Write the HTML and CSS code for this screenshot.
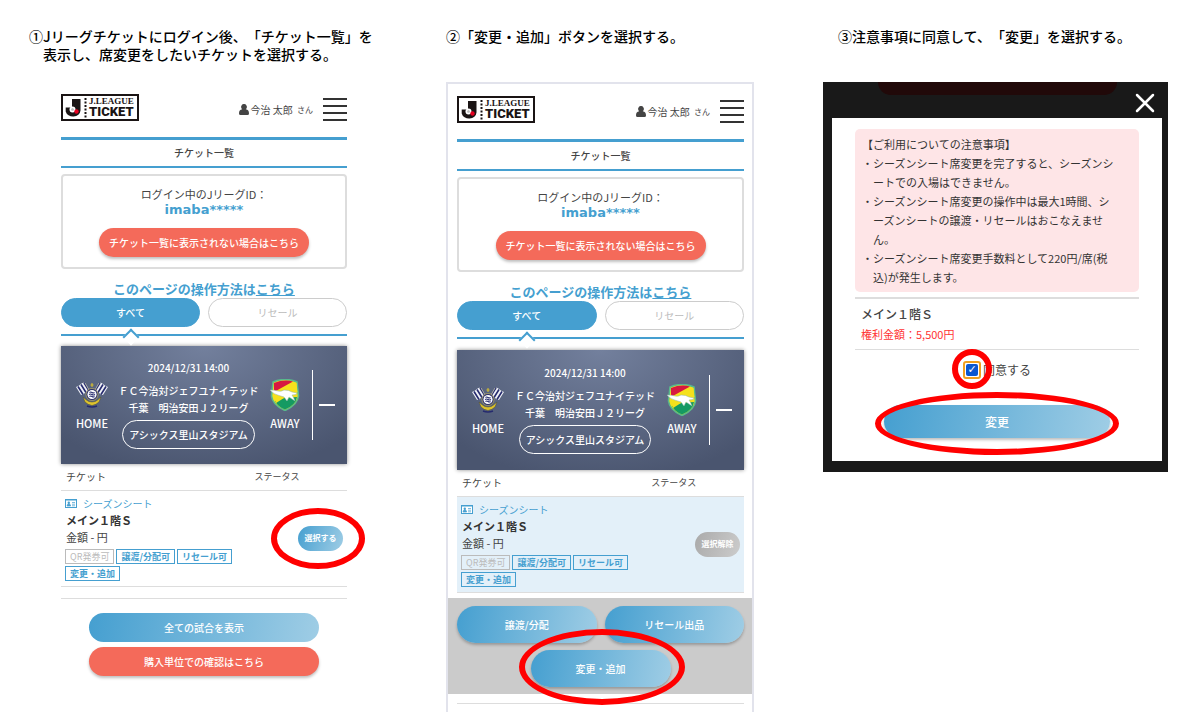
FILE: index.html
```html
<!DOCTYPE html>
<html lang="ja">
<head>
<meta charset="utf-8">
<meta name="viewport" content="width=device-width, initial-scale=1">
<title>シーズンシート席変更の手順</title>
<link rel="stylesheet" href="styles.css">
</head>
<body>
<svg class="sprite" aria-hidden="true">
  <symbol id="logo-mark" viewBox="0 0 78 27">
    <rect x="1" y="1" width="76" height="25" fill="#fff" stroke="#1a1414" stroke-width="2"/>
    <path d="M11 5h8.500v11.500a7.500 6.500 0 0 1-14.800 1v-4h5.300a2 2 0 0 0 1 .5z" fill="#1a1414"/>
    <circle cx="11.500" cy="15.500" r="3" fill="#fff"/>
    <path d="M11.500 14l1.500 1-.5 1.800h-2l-.5-1.800z" fill="#bbb"/>
    <circle cx="15.500" cy="17.500" r="2.200" fill="#e60020"/>
    <path d="M24.500 4v20" stroke="#1a1414" stroke-width="2" stroke-dasharray="2 1.500"/>
  </symbol>
  <symbol id="user" viewBox="0 0 10 11">
    <path d="M5 0a2.700 2.900 0 0 1 1.800 5.200C9 5.500 10 7 10 9.500Q10 11 8.500 11h-7Q0 11 0 9.500C0 7 1 5.500 3.200 5.200A2.700 2.900 0 0 1 5 0z" fill="#444"/>
  </symbol>
  <symbol id="card" viewBox="0 0 12 9">
    <rect x=".5" y=".5" width="11" height="8" fill="#fff" stroke="#459fd0"/>
    <path d="M1 1h10" stroke="#459fd0"/>
    <circle cx="3.800" cy="3.700" r="1.200" fill="#459fd0"/>
    <path d="M2 7q0-2 1.800-2t1.800 2zM7 3.500h3M7 5.200h3M7 6.800h3" fill="#459fd0" stroke="#459fd0" stroke-width=".7"/>
  </symbol>
  <symbol id="home" viewBox="0 0 32 26">
    <path d="M0 5q3-1 5-3t4-1l5 8q-3 0-5 2t-4 2z" fill="#eef0f5"/>
    <path d="M2 4.500l5 8M5 2.500l5 8M8 .8l5 8" stroke="#252a6e" stroke-width="1.600"/>
    <path d="M9 1l8 14" stroke="#b9b9a0" stroke-width=".8"/>
    <g transform="translate(32 0) scale(-1 1)">
      <path d="M0 5q3-1 5-3t4-1l5 8q-3 0-5 2t-4 2z" fill="#eef0f5"/>
      <path d="M2 4.500l5 8M5 2.500l5 8M8 .8l5 8" stroke="#252a6e" stroke-width="1.600"/>
      <path d="M9 1l8 14" stroke="#b9b9a0" stroke-width=".8"/>
    </g>
    <path d="M7 15l2 5q3 3 7 3.500 4-.5 7-3.500l2-5-3.500 3q-2 2-5.500 2t-5.500-2z" fill="#ddc32d" stroke="#4a4a38" stroke-width=".5"/>
    <circle cx="16" cy="12.500" r="6" fill="#252a6e" stroke="#dccb60" stroke-width=".6"/>
    <circle cx="16" cy="12.500" r="4.600" fill="#fff"/>
    <path d="M13.500 10.500q1.200-1 2.500 0t2.500 0M13 12.500q1.500-1 3 0t3 0M13.500 14.500q1.200-1 2.500 0t2.500 0" stroke="#252a6e" stroke-width="1.100" fill="none"/>
    <path d="M16 1v4M14.500 3h3" stroke="#ddc32d" stroke-width="1"/>
    <path d="M11 24q5 2 10 0" stroke="#252a6e" stroke-width="1.500" fill="none"/>
  </symbol>
  <symbol id="away" viewBox="0 0 30 32">
    <path d="M3 3q12-5 24 0l1.500 14q-1 9-13.500 14.500Q2.500 26 1.500 17z" fill="#f5e11c" stroke="#58b98c" stroke-width="1.600"/>
    <path d="M4 4q10-4 19-1.500L4 13z" fill="#d71840"/>
    <path d="M23 3l3.500 1 1 9-9-1z" fill="#f5e11c"/>
    <path d="M5 22l9-3 13-1q-1 8-12 12.500Q8 28 5 22z" fill="#159a62"/>
    <path d="M3 15l3 9 8-5-5-5z" fill="#f5e11c"/>
    <path d="M0 11q5 0 8 1t6-1q5 0 8 2l5 1-1 1.500-4 .5q2 3 3 6l-6-4-2 4-3-4-5-1.500q-5-1-9-5.500z" fill="#fff" stroke="#8fb6a5" stroke-width=".5"/>
  </symbol>
</svg>

<main class="steps">
  <section class="step">
    <h2 class="step-title">①Jリーグチケットにログイン後、「チケット一覧」を<br>表示し、席変更をしたいチケットを選択する。</h2>
    <div class="phone phone-plain">
      <header class="bar">
        <a href="#"><svg class="logo" viewBox="0 0 78 27"><use href="#logo-mark"/><text x="28" y="10" class="logo-top">J.LEAGUE</text><text x="28" y="22" class="logo-main">TICKET</text></svg></a>
        <p class="user"><svg class="user-icon"><use href="#user"/></svg>今治 太郎 <small>さん</small></p>
        <button class="menu" aria-label="メニュー"><i></i><i></i><i></i><i></i></button>
      </header>
      <h3 class="page-title">チケット一覧</h3>
      <div class="id-box">
        <p class="id-label">ログイン中のJリーグID：</p>
        <p class="id-value">imaba*****</p>
        <button class="btn btn-red">チケット一覧に表示されない場合はこちら</button>
      </div>
      <p class="howto">このページの操作方法は<a href="#">こちら</a></p>
      <div class="tabs">
        <button class="tab tab-on">すべて</button>
        <button class="tab">リセール</button>
      </div>
      <div class="tab-rule"></div>
      <div class="match">
        <div class="team"><svg class="emblem"><use href="#home"/></svg><span>HOME</span></div>
        <div class="game">
          <p class="time">2024/12/31 14:00</p>
          <p class="name">ＦＣ今治対ジェフユナイテッド千葉　明治安田Ｊ２リーグ</p>
          <p class="venue">アシックス里山スタジアム</p>
        </div>
        <div class="team"><svg class="emblem"><use href="#away"/></svg><span>AWAY</span></div>
        <button class="fold" aria-label="閉じる"><i></i></button>
      </div>
      <table class="tickets">
        <thead><tr><th>チケット</th><th class="status">ステータス</th></tr></thead>
        <tbody><tr>
          <td>
            <p class="kind"><svg class="card-icon"><use href="#card"/></svg>シーズンシート</p>
            <p class="seat">メイン１階Ｓ</p>
            <p class="price">金額 - 円</p>
            <ul class="tags"><li class="off">QR発券可</li><li>譲渡/分配可</li><li>リセール可</li><li>変更・追加</li></ul>
          </td>
          <td class="action"><span class="marked mark-select"><button class="pick">選択する</button></span></td>
        </tr></tbody>
      </table>
      <hr class="rule">
      <div class="links">
        <button class="btn btn-blue">全ての試合を表示</button>
        <button class="btn btn-red">購入単位での確認はこちら</button>
      </div>
    </div>
  </section>

  <section class="step">
    <h2 class="step-title">②「変更・追加」ボタンを選択する。</h2>
    <div class="phone phone-framed">
      <header class="bar">
        <a href="#"><svg class="logo" viewBox="0 0 78 27"><use href="#logo-mark"/><text x="28" y="10" class="logo-top">J.LEAGUE</text><text x="28" y="22" class="logo-main">TICKET</text></svg></a>
        <p class="user"><svg class="user-icon"><use href="#user"/></svg>今治 太郎 <small>さん</small></p>
        <button class="menu" aria-label="メニュー"><i></i><i></i><i></i><i></i></button>
      </header>
      <h3 class="page-title">チケット一覧</h3>
      <div class="id-box">
        <p class="id-label">ログイン中のJリーグID：</p>
        <p class="id-value">imaba*****</p>
        <button class="btn btn-red">チケット一覧に表示されない場合はこちら</button>
      </div>
      <p class="howto">このページの操作方法は<a href="#">こちら</a></p>
      <div class="tabs">
        <button class="tab tab-on">すべて</button>
        <button class="tab">リセール</button>
      </div>
      <div class="tab-rule"></div>
      <div class="match">
        <div class="team"><svg class="emblem"><use href="#home"/></svg><span>HOME</span></div>
        <div class="game">
          <p class="time">2024/12/31 14:00</p>
          <p class="name">ＦＣ今治対ジェフユナイテッド千葉　明治安田Ｊ２リーグ</p>
          <p class="venue">アシックス里山スタジアム</p>
        </div>
        <div class="team"><svg class="emblem"><use href="#away"/></svg><span>AWAY</span></div>
        <button class="fold" aria-label="閉じる"><i></i></button>
      </div>
      <table class="tickets">
        <thead><tr><th>チケット</th><th class="status">ステータス</th></tr></thead>
        <tbody><tr class="selected">
          <td>
            <p class="kind"><svg class="card-icon"><use href="#card"/></svg>シーズンシート</p>
            <p class="seat">メイン１階Ｓ</p>
            <p class="price">金額 - 円</p>
            <ul class="tags"><li class="off">QR発券可</li><li>譲渡/分配可</li><li>リセール可</li><li>変更・追加</li></ul>
          </td>
          <td class="action"><button class="pick pick-off">選択解除</button></td>
        </tr></tbody>
      </table>
      <div class="dock">
        <button class="btn btn-blue">譲渡/分配</button>
        <button class="btn btn-blue">リセール出品</button>
        <span class="marked mark-change"><button class="btn btn-blue">変更・追加</button></span>
      </div>
      <hr class="rule">
    </div>
  </section>

  <section class="step">
    <h2 class="step-title step-title-inset">③注意事項に同意して、「変更」を選択する。</h2>
    <div class="overlay">
      <div class="overlay-top">
        <span class="behind"></span>
        <button class="close" aria-label="閉じる"><svg viewBox="0 0 20 20"><path d="M2 2l16 16M18 2L2 18" stroke="#fff" stroke-width="2.500" stroke-linecap="round"/></svg></button>
      </div>
      <div class="dialog">
        <div class="notice">
          <p>【ご利用についての注意事項】</p>
          <ul>
            <li>シーズンシート席変更を完了すると、シーズンシートでの入場はできません。</li>
            <li>シーズンシート席変更の操作中は最大1時間、シーズンシートの譲渡・リセールはおこなえません。</li>
            <li>シーズンシート席変更手数料として220円/席(税込)が発生します。</li>
          </ul>
        </div>
        <div class="summary">
          <p class="summary-seat">メイン１階Ｓ</p>
          <p class="summary-fee">権利金額：5,500円</p>
        </div>
        <div class="agree">
          <span class="marked mark-check"><input type="checkbox" id="agree" checked></span>
          <label for="agree">同意する</label>
        </div>
        <div class="marked mark-submit"><button class="btn btn-blue">変更</button></div>
      </div>
    </div>
  </section>
</main>
</body>
</html>
```

FILE: styles.css
```css
:root {
  --blue: #459fd0;
  --red: #f46a5a;
  --ink: #444;
  --line: #ddd;
}

* { box-sizing: border-box; }

body {
  margin: 0;
  background: #fff;
  color: var(--ink);
  font: 10px/16px "Noto Sans CJK JP", sans-serif;
  text-spacing-trim: space-all;
}

p, h2, h3, ul { margin: 0; padding: 0; font-size: inherit; }
ul { list-style: none; }
button { padding: 0; border: 0; background: none; font: inherit; cursor: pointer; }
svg { display: block; }
.sprite { position: absolute; width: 0; height: 0; }

.steps {
  display: grid;
  grid-template-columns: 348fr 308fr 345fr;
  align-items: start;
  gap: 69px;
  padding: 27px 32px 0 29px;
}

.step-title {
  min-height: 55px;
  padding-left: 14px;
  color: #000;
  font-size: 14px;
  font-weight: 500;
  line-height: 18px;
  text-indent: -14px;
  white-space: nowrap;
}
.step-title-inset { padding-left: 29px; }

.phone-plain { padding: 12px 30px 0 32px; }
.phone-framed {
  padding: 12px 8px 8px 9px;
  border: 2px solid #e2e3ec;
  border-bottom: 0;
}

/* Header */
.bar { display: flex; align-items: center; margin-bottom: 16px; }
.logo { width: 78px; height: 27px; }
.logo-top { font: 700 9px "Liberation Serif", serif; fill: #1a1414; }
.logo-main { font: 900 13px Roboto, sans-serif; fill: #1a1414; }
.user { display: flex; align-items: center; gap: 2px; margin-left: auto; padding-top: 4px; line-height: 23px; white-space: pre; }
.user small { font-size: 8px; }
.user-icon { width: 10px; height: 11px; }
.menu { display: grid; gap: 5px; width: 24px; margin-left: 10px; padding-top: 4px; }
.menu i { height: 2px; background: #333; }

.page-title {
  border-top: 3px solid var(--blue);
  border-bottom: 2px solid var(--blue);
  font-weight: 500;
  line-height: 26px;
  text-align: center;
}
.phone-framed .page-title { line-height: 27px; }

/* Buttons */
.btn {
  min-height: 29px;
  border-radius: 19px;
  color: #fff;
  font-weight: 500;
  box-shadow: 0 2px 3px rgba(0, 0, 0, .25);
}
.btn-red { background: var(--red); }
.btn-blue { background: linear-gradient(100deg, #459fd0, #9fcde5); }

.id-box {
  display: flex;
  flex-direction: column;
  align-items: center;
  margin-top: 6px;
  padding: 10px 0;
  border: 2px solid var(--line);
  border-radius: 4px;
}
.id-label { font-size: 11px; }
.id-value { color: var(--blue); font: 700 13px/16px "DejaVu Sans", sans-serif; }
.id-box .btn { margin-top: 10px; padding: 0 10px; }

.howto {
  margin-top: 10px;
  color: var(--blue);
  font-size: 13px;
  font-weight: 700;
  line-height: 19px;
  text-align: center;
}
.howto a { color: inherit; }

/* Tabs */
.tabs { display: grid; grid-template-columns: 1fr 1fr; gap: 8px; }
.tab { min-height: 29px; border: 1px solid #ccc; border-radius: 15px; color: #bbb; }
.tab-on { border-color: var(--blue); background: var(--blue); color: #fff; font-weight: 500; }
.tab-rule { position: relative; margin: 7px 0 10px; border-top: 2px solid var(--blue); }
.phone-framed .tab-rule { margin-bottom: 11px; }
.tab-rule::after {
  content: "";
  position: absolute;
  top: -5px;
  left: 24%;
  width: 10px;
  height: 10px;
  margin-left: -5px;
  border: solid var(--blue);
  border-width: 2px 0 0 2px;
  background: #fff;
  transform: rotate(45deg);
}

/* Match card */
.match {
  display: grid;
  grid-template-columns: 42px 1fr 42px 29px;
  align-items: center;
  padding: 14px 12px 15px 10px;
  background: radial-gradient(ellipse 70% 110% at 50% 0, #73809d, #4a556f);
  box-shadow: 0 0 4px rgba(0, 0, 0, .45);
  color: #fff;
}
.phone-framed .match { padding-top: 15px; padding-bottom: 16px; }
.team { display: grid; justify-items: center; gap: 4px; font-size: 11px; font-weight: 500; }
.emblem { width: 32px; height: 32px; }
.game { padding: 0 4px; text-align: center; font-weight: 500; }
.name { margin: 6px 0 4px; line-height: 17px; }
.venue { width: max-content; margin: auto; padding: 0 6px; border: 1px solid #fff; border-radius: 15px; line-height: 27px; }
.fold { display: flex; align-items: center; justify-content: flex-end; height: 70px; margin-left: 6px; border-left: 1px solid #fff; }
.fold i { width: 16px; height: 2px; background: #fff; }

/* Ticket list */
.tickets { width: 100%; border-spacing: 0; table-layout: fixed; }
.tickets th { padding: 0 5px; font-weight: 400; line-height: 26px; text-align: left; }
.tickets .status { width: 40%; padding-left: 22px; font-size: 9px; }
.tickets td { padding: 4px 0 5px 4px; border: solid var(--line); border-width: 1px 0; }
.tickets .action { padding-right: 4px; text-align: right; }
.selected { background: #e3f0f9; }
.kind { display: flex; align-items: center; gap: 6px; color: var(--blue); line-height: 17px; }
.card-icon { width: 12px; height: 9px; }
.seat, .price { padding-left: 1px; font-size: 11px; line-height: 17px; }
.seat { color: #333; font-weight: 700; }
.tags { display: flex; flex-wrap: wrap; gap: 2px; margin: 3px -8px 0 0; }
.tags li { padding: 0 4px; border: 1px solid var(--blue); color: var(--blue); font-size: 9px; font-weight: 700; line-height: 13px; }
.tags .off { border-color: #bbb; color: #bbb; font-weight: 400; }
.pick { width: 45px; height: 25px; border-radius: 13px; background: linear-gradient(110deg, #459fd0, #9fcde5); color: #fff; font-size: 8px; font-weight: 700; }
.pick-off { background: linear-gradient(110deg, #aaa, #ccc); }

.rule { margin: 11px 0 0; border: 0; border-top: 1px solid var(--line); }
.links { display: grid; gap: 5px; margin: 14px 28px 0; }
.links .btn-blue { box-shadow: none; }

.dock {
  display: grid;
  grid-template-columns: 1fr 1fr;
  gap: 7px 8px;
  margin: 5px -8px 0 -9px;
  padding: 8px 8px 7px 9px;
  background: #cbcbcb;
}
.dock .btn { min-height: 37px; }
.dock .marked { grid-column: 1 / -1; justify-self: center; width: 140px; }
.dock .marked .btn { width: 100%; }
.dock + .rule { margin-top: 9px; }

/* Red rings drawn over the control to press */
.marked { display: inline-block; position: relative; vertical-align: middle; }
.marked::after {
  content: "";
  position: absolute;
  border: 6px solid #f00;
  border-radius: 50%;
  pointer-events: none;
}
.mark-select::after { inset: -18px -22px -18px -27px; }
.mark-change::after { inset: -21px -14px -18px -12px; }
.mark-check::after { inset: -12px -11px -10px -11px; }
.mark-submit::after { inset: -13px -9px -17px -9px; }

/* Confirmation dialog */
.overlay { padding: 0 6px 11px 9px; background: #191919; }
.overlay-top { display: grid; grid-template-columns: 46px 1fr 45px; align-items: start; min-height: 36px; }
.behind { grid-column: 2; height: 13px; border-radius: 0 0 13px 13px; background: #210909; }
.close { justify-self: center; width: 20px; height: 20px; margin: 11px 0 0 10px; }
.dialog { padding: 11px 23px 23px; background: #fff; }
.notice {
  padding: 6px 21px 5px 7px;
  border-radius: 5px;
  background: #fee5e7;
  color: #333;
  font-size: 11px;
  line-height: 19px;
  line-break: loose;
}
.notice li { padding-left: 11px; text-indent: -11px; }
.notice li::before { content: "・"; }
.summary { margin-top: 5px; padding: 5px 6px; border-top: 2px solid var(--line); border-bottom: 1px solid var(--line); line-height: 20px; }
.summary-seat { font-size: 12px; font-weight: 500; }
.summary-fee { color: #f33; font-size: 11px; }
.agree { display: flex; align-items: center; justify-content: center; gap: 2px; margin-top: 10px; font-size: 12px; line-height: 20px; }
.agree input {
  display: block;
  width: 18px;
  height: 18px;
  margin: 0;
  appearance: none;
  border: 2px solid #f0a020;
  border-radius: 3px;
  background: #fff;
}
.agree input::before {
  content: "✓";
  display: block;
  width: 12px;
  height: 12px;
  margin: 1px;
  border-radius: 2px;
  background: #0b57d0;
  color: #fff;
  font: 700 11px/12px "DejaVu Sans", sans-serif;
  text-align: center;
}
.mark-submit { display: block; margin: 25px 29px 0; }
.mark-submit .btn { width: 100%; min-height: 33px; font-size: 12px; }
```
